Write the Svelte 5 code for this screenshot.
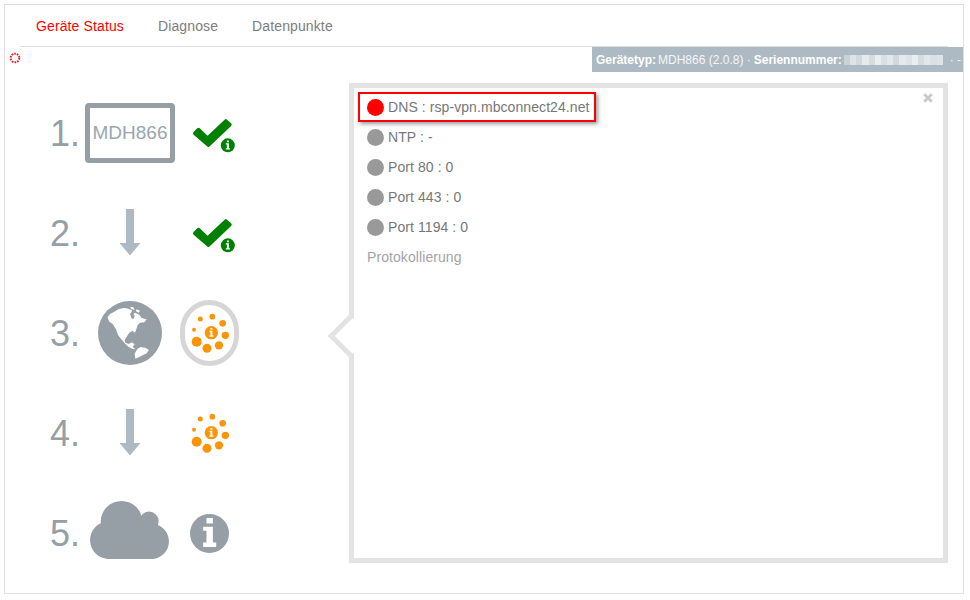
<script>
  const tabs = ['Geräte Status', 'Diagnose', 'Datenpunkte'];

  const checks = [
    { name: 'DNS', value: 'rsp-vpn.mbconnect24.net', failed: true },
    { name: 'NTP', value: '-' },
    { name: 'Port 80', value: '0' },
    { name: 'Port 443', value: '0' },
    { name: 'Port 1194', value: '0' }
  ];

  // serial number is pixelated in the screenshot
  const blur = [0.35, 0.6, 0.45, 0.7, 0.5, 0.75, 0.55, 0.65, 0.45, 0.7, 0.6, 0.75, 0.5, 0.65, 0.55, 0.6];

  const dots = [
    [517, 81, 8.5], [548, 101, 10], [556, 137, 11], [537, 167, 12.5],
    [501, 176, 13.5], [470, 156, 15], [462, 120, 6], [481, 88, 7.5]
  ];
</script>

{#snippet infoGlyph(fill)}
  <path fill={fill} d="M-9-46H10V-30H-9ZM-19-20H10V27H20V40H-19V27H-9V-8H-19Z" />
{/snippet}

{#snippet checkIcon()}
  <svg class="check" viewBox="30 30 140 120" width="47" height="40">
    <path d="M44 85 55 74 82 100 137 48 149 59 85 120Z" fill="#008000" stroke="#008000" stroke-width="11" stroke-linejoin="round" />
    <circle cx="143" cy="121" r="24" fill="#fff" />
    <circle cx="143" cy="121" r="21" fill="#008000" />
    <g transform="translate(143 121) scale(.32)">{@render infoGlyph('#fff')}</g>
  </svg>
{/snippet}

{#snippet progressIcon()}
  <svg viewBox="450 70 120 120" width="40" height="40">
    {#each dots as [cx, cy, r]}
      <circle {cx} {cy} {r} fill="#fb9507" />
    {/each}
    <circle cx="514" cy="129" r="20" fill="#fb9507" />
    <g transform="translate(514 129) scale(.3)">{@render infoGlyph('#fff')}</g>
  </svg>
{/snippet}

{#snippet arrowIcon()}
  <svg class="arrow" viewBox="0 0 22 47" width="22" height="47">
    <path d="M7 0H15V34H21.5L11 46.5.5 34H7Z" fill="#adbac3" />
  </svg>
{/snippet}

<div class="frame">
  <nav class="tabs">
    {#each tabs as tab, i}
      <span class="tab" class:active={i === 0}>{tab}</span>
    {/each}
  </nav>

  <div class="statusbar">
    <svg class="spinner" viewBox="0 0 12 12" width="12" height="12">
      <circle cx="6" cy="6" r="4.3" fill="none" stroke="#e8222a" stroke-width="2" stroke-dasharray="1.7 1" />
    </svg>
    <div class="deviceinfo">
      <b>Gerätetyp:</b><span class="type">MDH866 (2.0.8) ·</span>
      <b class="serial_label">Seriennummer:</b>
      <span class="serial">
        {#each blur as o}
          <i style="opacity: {o}"></i>
        {/each}
      </span>
      <span class="trail">· -</span>
    </div>
  </div>

  <div class="main">
    <div class="steps">
      <div class="step">
        <span class="num">1.</span>
        <div class="device">MDH866</div>
        <div class="state">{@render checkIcon()}</div>
      </div>
      <div class="step">
        <span class="num">2.</span>
        <div class="node">{@render arrowIcon()}</div>
        <div class="state">{@render checkIcon()}</div>
      </div>
      <div class="step">
        <span class="num">3.</span>
        <div class="node">
          <svg viewBox="24 33 192 192" width="64" height="64">
            <circle cx="120" cy="129" r="96" fill="#959fa5" />
            <path fill="#fff" d="M52 82 60 72 72 66 85 58 100 54 110 55 125 60 125 66 120 72 124 84 130 88 134 78 130 72 135 68 148 74 155 84 170 88 163 97 150 98 143 105 140 115 135 128 128 122 118 128 110 140 104 150 106 158 116 162 125 157 134 163 128 170 136 178 128 177 115 170 104 160 94 148 84 135 78 118 68 102 58 95Z" />
            <path fill="#fff" d="M134 191 142 177 152 171 166 173 177 180 170 190 158 196 146 202 136 206Z" />
            <path fill="#fff" d="M120 50 130 52 134 60 124 57ZM140 58 150 62 146 68 138 64Z" />
          </svg>
        </div>
        <div class="state"><div class="selected">{@render progressIcon()}</div></div>
      </div>
      <div class="step">
        <span class="num">4.</span>
        <div class="node">{@render arrowIcon()}</div>
        <div class="state">{@render progressIcon()}</div>
      </div>
      <div class="step">
        <span class="num">5.</span>
        <div class="node">
          <svg class="cloud" viewBox="150 332 238 175" width="79" height="58">
            <circle cx="245" cy="395" r="63" fill="#959fa5" />
            <circle cx="328" cy="393" r="29" fill="#959fa5" />
            <circle cx="207" cy="450" r="57" fill="#959fa5" />
            <circle cx="335" cy="454" r="53" fill="#959fa5" />
            <rect x="200" y="420" width="140" height="87" fill="#959fa5" />
          </svg>
        </div>
        <div class="state">
          <svg class="info" viewBox="-58 -58 116 116" width="39" height="39">
            <circle r="58" fill="#959fa5" />
            {@render infoGlyph('#fff')}
          </svg>
        </div>
      </div>
    </div>

    <section class="panel">
      <span class="pointer"></span>
      <svg class="close" viewBox="0 0 10 10" width="10" height="10">
        <path d="M1.2 1.2 8.8 8.8M8.8 1.2 1.2 8.8" stroke="#c8c8c8" stroke-width="2.8" />
      </svg>
      {#each checks as check}
        <div class="check_row" class:failed={check.failed}>
          <span class="led"></span>
          <span>{check.name} : {check.value}</span>
        </div>
      {/each}
      <div class="log">Protokollierung</div>
    </section>
  </div>
</div>

<style>
  :global(body) {
    background: #fff;
    font-family: "Liberation Sans", Arial, sans-serif;
  }

  .frame {
    box-sizing: border-box;
    width: 960px;
    height: 590px;
    margin: 4px 0 0 4px;
    border: 1px solid #e0e0e0;
  }

  .tabs {
    display: flex;
    gap: 34px;
    height: 41px;
    margin: 0 15px;
    padding-left: 16px;
    border-bottom: 1px solid #dedede;
    line-height: 42px;
    font-size: 14px;
    letter-spacing: 0.12px;
    color: #7d7d7d;
  }

  .tab.active {
    color: #f00;
  }

  .statusbar {
    display: flex;
    justify-content: space-between;
    height: 25px;
  }

  .spinner {
    margin: 5px 0 0 4px;
  }

  .deviceinfo {
    display: flex;
    align-items: center;
    width: 371px;
    box-sizing: border-box;
    padding-left: 4px;
    background: #adbac3;
    color: #f4f6f7;
    font-size: 12px;
    white-space: pre;
  }

  .deviceinfo b {
    color: #fff;
  }

  .type {
    margin-left: 2px;
  }

  .serial_label {
    margin-left: 3px;
  }

  .serial {
    display: flex;
    width: 99px;
    height: 10px;
    margin-left: 2px;
  }

  .serial i {
    flex: 1;
    background: #fff;
  }

  .trail {
    margin-left: 7px;
  }

  .main {
    display: flex;
    margin-top: 11px;
  }

  .steps {
    width: 344px;
    padding-left: 45px;
    box-sizing: border-box;
  }

  .step {
    display: grid;
    grid-template-columns: 35px 90px 70px;
    align-items: center;
    height: 100px;
  }

  .num {
    padding-top: 2px;
    font-size: 36px;
    color: #959fa5;
  }

  .node,
  .state {
    display: flex;
    justify-content: center;
    align-items: center;
  }

  .arrow {
    margin-bottom: 2px;
  }

  .cloud {
    margin: 0 2px 6px 0;
  }

  .info {
    margin-right: 2px;
  }

  .device {
    box-sizing: border-box;
    height: 60px;
    border: 5px solid #959fa5;
    border-radius: 4px;
    line-height: 50px;
    text-align: center;
    font-size: 19px;
    color: #9aa6ae;
  }

  .selected {
    display: flex;
    justify-content: center;
    align-items: center;
    box-sizing: border-box;
    width: 59px;
    height: 66px;
    margin-left: -1px;
    border: 5px solid #d6d6d6;
    border-radius: 50% / 46%;
  }

  .check {
    margin-left: 7px;
    margin-top: 4px;
  }

  .panel {
    position: relative;
    box-sizing: border-box;
    width: 599px;
    height: 480px;
    padding: 4px 13px;
    border: 5px solid #e3e3e3;
    font-size: 14px;
    letter-spacing: 0.08px;
    color: #777;
  }

  .pointer {
    position: absolute;
    left: -20px;
    top: 233px;
    box-sizing: border-box;
    width: 30px;
    height: 30px;
    background: #fff;
    border-left: 5px solid #e3e3e3;
    border-bottom: 5px solid #e3e3e3;
    transform: rotate(45deg);
  }

  .close {
    position: absolute;
    right: 10px;
    top: 5px;
  }

  .check_row {
    position: relative;
    display: flex;
    align-items: center;
    gap: 4px;
    height: 30px;
  }

  .check_row.failed {
    box-sizing: border-box;
    width: fit-content;
    margin-left: -9px;
    padding: 0 4px 0 7px;
    border: 2px solid #f00;
    box-shadow: 2px 2px 4px rgba(0, 0, 0, 0.4);
  }

  .led {
    width: 17px;
    height: 17px;
    border-radius: 50%;
    background: #999;
  }

  .failed .led {
    background: #f00;
  }

  .log {
    line-height: 30px;
    color: #a3a3a3;
  }
</style>
